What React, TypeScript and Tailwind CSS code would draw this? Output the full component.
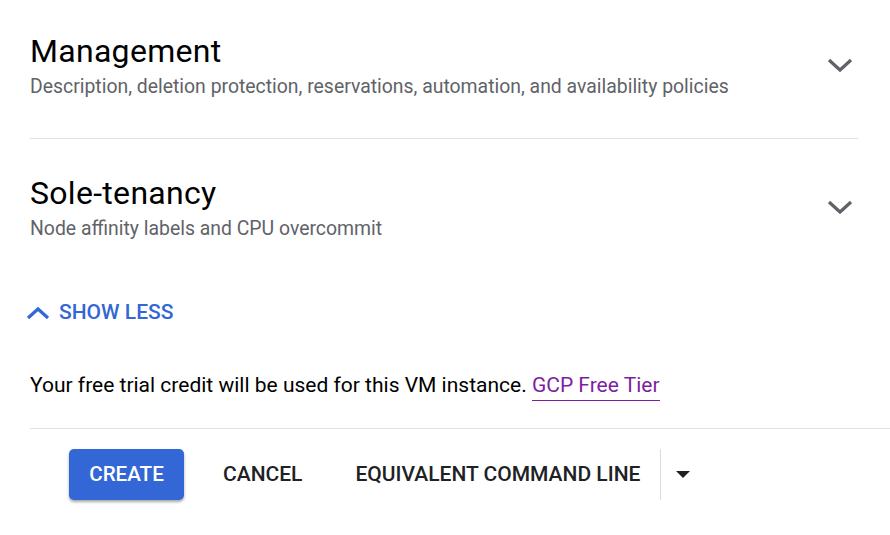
import { ReactNode } from 'react';

function ChevronDown() {
  return (
    <svg width="26" height="16" viewBox="0 0 26 16" className="text-[#5f6368]">
      <polyline points="2,3 13,13 24,3" fill="none" stroke="currentColor" strokeWidth="3.2" />
    </svg>
  );
}

function Section({ title, desc, className = '' }: { title: string; desc: string; className?: string }) {
  return (
    <div className={`flex items-center justify-between ${className}`}>
      <div>
        <h2 className="text-[32px] leading-[36px] tracking-[0.3px] text-[#000000]">{title}</h2>
        <p className="mt-[6px] text-[19.4px] leading-[24px] text-[#5f6368]">{desc}</p>
      </div>
      <button className="w-[36px] flex justify-center -mt-[3px]">
        <ChevronDown />
      </button>
    </div>
  );
}

function TextButton({ children }: { children: ReactNode }) {
  return (
    <button className="px-[18px] h-[51px] text-[21px] font-medium text-[#202124] uppercase">{children}</button>
  );
}

export default function App() {
  return (
    <div className="w-[890px] h-[535px] bg-white overflow-hidden font-['Roboto',sans-serif]">
      <div className="pl-[30px]">
        <div className="pr-[32px]">
          <Section
            className="pt-[33px]"
            title="Management"
            desc="Description, deletion protection, reservations, automation, and availability policies"
          />
          <div className="mt-[39px] border-t border-[#e0e0e0]" />
          <Section
            className="pt-[36px]"
            title="Sole-tenancy"
            desc="Node affinity labels and CPU overcommit"
          />
        </div>

        <button className="mt-[60px] -ml-[4px] flex items-center gap-[9px] h-[24px] text-[21px] font-medium text-[#3367d6]">
          <svg width="24" height="16" viewBox="0 0 24 16">
            <polyline points="2,13 12,4 22,13" fill="none" stroke="currentColor" strokeWidth="3.2" />
          </svg>
          SHOW LESS
        </button>

        <p className="mt-[48px] text-[21px] leading-[24px] text-[#000000]">
          Your free trial credit will be used for this VM instance.{' '}
          <a href="#" className="text-[#7b1fa2] border-b border-[#7b1fa2] pb-[3px]">GCP Free Tier</a>
        </p>

        <div className="mt-[31px] border-t border-[#e0e0e0]" />

        <div className="mt-[20px] pl-[39px] flex items-center">
          <button className="h-[51px] w-[115px] rounded-[5px] bg-[#3367d6] text-white text-[20.6px] font-medium shadow-[0_2px_3px_rgba(0,0,0,0.35)]">
            CREATE
          </button>
          <div className="ml-[21px]">
            <TextButton>Cancel</TextButton>
          </div>
          <div className="ml-[17px]">
            <TextButton>Equivalent command line</TextButton>
          </div>
          <div className="ml-[2px] h-[51px] border-l border-[#dadce0]" />
          <button className="h-[51px] w-[44px] flex items-center justify-center">
            <svg width="14" height="8" viewBox="0 0 14 8">
              <polygon points="0,0 14,0 7,7" fill="#202124" />
            </svg>
          </button>
        </div>
      </div>
    </div>
  );
}
